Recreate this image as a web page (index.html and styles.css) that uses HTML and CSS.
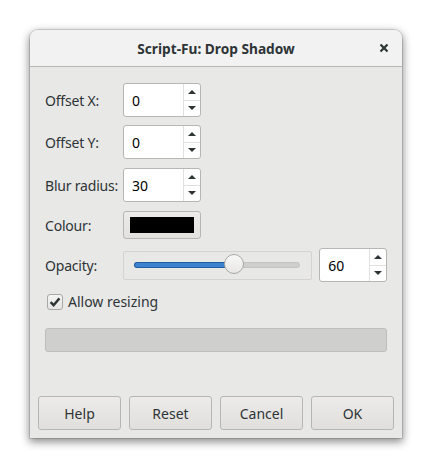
FILE: index.html
```html
<!DOCTYPE html>
<html>
<head>
<meta charset="utf-8">
<link rel="stylesheet" href="styles.css">
</head>
<body>
<div class="window">
  <div class="titlebar">
    <div class="title">Script-Fu: Drop Shadow</div>
    <div class="close">
      <svg width="10" height="10" viewBox="0 0 10 10"><path d="M1.5 1.5 L8.5 8.5 M8.5 1.5 L1.5 8.5" stroke="#2e3436" stroke-width="2.2" stroke-linecap="butt"/></svg>
    </div>
  </div>
  <div class="content">
    <div class="row r1">
      <div class="label">Offset X:</div>
      <div class="spin w77"><div class="val">0</div><div class="btns"><div class="up"></div><div class="down"></div></div></div>
    </div>
    <div class="row r2">
      <div class="label">Offset Y:</div>
      <div class="spin w77"><div class="val">0</div><div class="btns"><div class="up"></div><div class="down"></div></div></div>
    </div>
    <div class="row r3">
      <div class="label">Blur radius:</div>
      <div class="spin w77"><div class="val">30</div><div class="btns"><div class="up"></div><div class="down"></div></div></div>
    </div>
    <div class="row r4">
      <div class="label">Colour:</div>
      <div class="colorbtn"><div class="swatch"></div></div>
    </div>
    <div class="row r5">
      <div class="label">Opacity:</div>
      <div class="scale">
        <div class="trough"><div class="fill"></div><div class="knob"></div></div>
      </div>
      <div class="spin w68"><div class="val">60</div><div class="btns"><div class="up"></div><div class="down"></div></div></div>
    </div>
    <div class="check-row">
      <div class="checkbox">
        <svg width="12" height="12" viewBox="0 0 12 12"><path d="M1.6 6.2 L4.6 9.2 L10.4 2.4" fill="none" stroke="#2e3436" stroke-width="2.4"/></svg>
      </div>
      <div class="check-label">Allow resizing</div>
    </div>
    <div class="progress"></div>
  </div>
  <div class="actions">
    <div class="button">Help</div>
    <div class="button">Reset</div>
    <div class="button">Cancel</div>
    <div class="button">OK</div>
  </div>
</div>
</body>
</html>
```
FILE: styles.css
```css
html, body {
  margin: 0;
  padding: 0;
  background: #ffffff;
}
body {
  width: 432px;
  height: 468px;
  overflow: hidden;
  font-family: "Noto Sans", "DejaVu Sans", sans-serif;
  font-size: 14px;
  color: #2e3436;
}
.window {
  margin: 30px 0 0 30px;
  width: 372px;
  height: 408px;
  background: #e8e8e7;
  border-radius: 8px 8px 0 0;
  box-shadow: 0 3px 9px 1px rgba(0,0,0,0.45), 0 0 0 1px rgba(0,0,0,0.12);
  display: flex;
  flex-direction: column;
}
.titlebar {
  height: 36px;
  border-bottom: 1px solid #b6b6b3;
  background: #f2f2f2;
  border-radius: 8px 8px 0 0;
  display: flex;
  align-items: center;
  justify-content: center;
  position: relative;
}
.title {
  font-weight: bold;
  font-size: 13.7px;
}
.close {
  position: absolute;
  right: 13px;
  top: 13px;
  width: 10px;
  height: 10px;
  display: flex;
}
.content {
  padding: 16px 15px 0 15px;
  display: flex;
  flex-direction: column;
  flex: 1;
}
.row {
  display: flex;
  align-items: center;
}
.r1, .r2, .r3, .r5 { height: 34px; }
.r4 { height: 28px; }
.r2 { margin-top: 8px; }
.r3 { margin-top: 9px; }
.r4 { margin-top: 9px; }
.r5 { margin-top: 9px; }
.label {
  width: 78px;
  flex: none;
  letter-spacing: -0.2px;
}
.spin {
  height: 34px;
  box-sizing: border-box;
  border: 1px solid #b6b6b3;
  border-radius: 3px;
  background: #ffffff;
  display: flex;
}
.w77 { width: 78px; }
.w68 { width: 68px; margin-left: 7px; }
.val {
  flex: 1;
  display: flex;
  align-items: center;
  padding-left: 8px;
  color: #000;
}
.btns {
  width: 16px;
  border-left: 1px solid #e0e0de;
  display: flex;
  flex-direction: column;
}
.up, .down {
  flex: 1;
  display: flex;
  align-items: center;
  justify-content: center;
}
.up { border-bottom: 1px solid #e0e0de; }
.up::before {
  content: "";
  width: 0; height: 0;
  border-left: 4px solid transparent;
  border-right: 4px solid transparent;
  border-bottom: 4px solid #2e3436;
}
.down::before {
  content: "";
  width: 0; height: 0;
  border-left: 4px solid transparent;
  border-right: 4px solid transparent;
  border-top: 4px solid #2e3436;
}
.colorbtn {
  width: 78px;
  height: 28px;
  box-sizing: border-box;
  border: 1px solid #b6b6b3;
  border-radius: 3px;
  background: linear-gradient(to bottom, #edebe9, #e3e1de);
  display: flex;
  align-items: center;
  justify-content: center;
}
.swatch {
  width: 64px;
  height: 16px;
  background: #000;
}
.scale {
  width: 190px;
  height: 29px;
  box-sizing: border-box;
  border: 1px solid #d6d3cf;
  border-radius: 2px;
  display: flex;
  align-items: center;
  padding: 0 11px 0 10px;
}
.trough {
  flex: 1;
  height: 4px;
  background: #cfcfcd;
  border: 1px solid #c3c3c0;
  border-radius: 3px;
  position: relative;
}
.fill {
  width: 100px;
  height: 100%;
  background: #3b83d1;
  border-radius: 3px 0 0 3px;
  box-shadow: 0 0 0 1px #215d9c;
}
.knob {
  position: absolute;
  left: 89px;
  top: -9px;
  width: 20px;
  height: 20px;
  box-sizing: border-box;
  border: 1px solid #a8a8a5;
  border-radius: 50%;
  background: linear-gradient(to bottom, #f8f8f7, #e8e7e5);
}
.check-row {
  display: flex;
  align-items: center;
  margin-top: 10px;
  height: 19px;
  padding-left: 2px;
}
.checkbox {
  width: 16px;
  height: 16px;
  box-sizing: border-box;
  border: 1px solid #a8a8a5;
  border-radius: 3px;
  background: linear-gradient(to bottom, #f4f4f3, #e6e5e3);
  display: flex;
  align-items: center;
  justify-content: center;
}
.check-label {
  margin-left: 5px;
}
.progress {
  margin-top: 17px;
  height: 24px;
  box-sizing: border-box;
  border: 1px solid #bdbdba;
  border-radius: 3px;
  background: #cfcfcd;
}
.actions {
  display: flex;
  gap: 8px;
  padding: 0 8px 8px 8px;
}
.button {
  width: 83px;
  height: 34px;
  box-sizing: border-box;
  border: 1px solid #b6b6b3;
  border-radius: 3px;
  background: linear-gradient(to bottom, #edebe9, #e1dfdc);
  display: flex;
  align-items: center;
  justify-content: center;
}
```
